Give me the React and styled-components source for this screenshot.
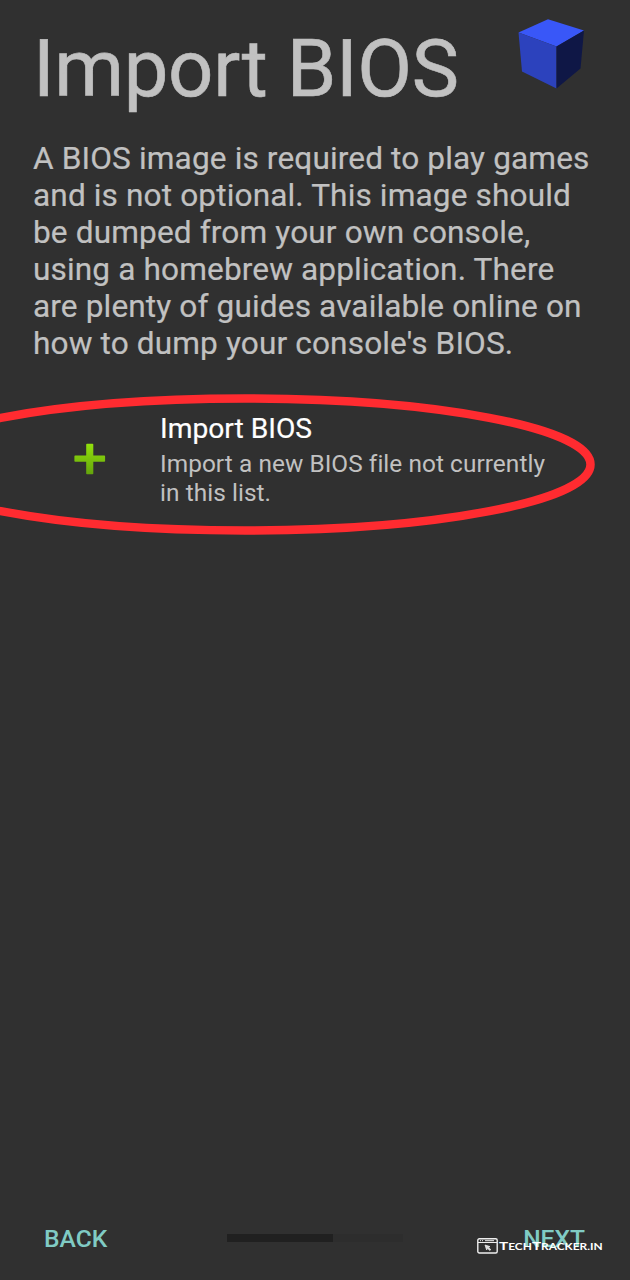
import React from 'react';
import styled, { createGlobalStyle } from 'styled-components';

const GlobalStyle = createGlobalStyle`
  * { box-sizing: border-box; }
  body { margin: 0; background: #303030; }
`;

const Screen = styled.main`
  position: relative;
  display: flex;
  flex-direction: column;
  width: 630px;
  height: 1280px;
  overflow: hidden;
  background: #303030;
  color: #c1c1c1;
  font-family: Roboto, 'Liberation Sans', sans-serif;
`;

const Header = styled.header`
  display: flex;
  justify-content: space-between;
  align-items: flex-start;
  height: 119px;
  padding: 0 45px 0 33px;
`;

const Title = styled.h1`
  margin: 22px 0 0;
  font-size: 79.6px;
  line-height: 94px;
  letter-spacing: -0.35px;
  font-weight: 400;
  white-space: nowrap;
  -webkit-text-stroke: 0.6px currentColor;
`;

const Cube = styled.svg`
  width: 68px;
  height: 72px;
  margin-top: 18px;
  flex: none;
`;

const Description = styled.p`
  margin: 22.4px 0 0;
  padding-left: 33px;
  font-size: 31.6px;
  line-height: 36.9px;
  letter-spacing: 0.13px;
  white-space: nowrap;
  -webkit-text-stroke: 0.2px currentColor;
`;

const ImportRow = styled.section`
  display: flex;
  margin-top: 49.6px;
  padding-left: 74px;
`;

const PlusIcon = styled.svg`
  width: 32px;
  height: 32px;
  margin: 31px 54px 0 0;
  flex: none;
`;

const RowTitle = styled.h2`
  margin: 0;
  color: #fff;
  font-size: 28.2px;
  line-height: 34px;
  font-weight: 400;
  white-space: nowrap;
  -webkit-text-stroke: 0.2px currentColor;
`;

const RowText = styled.p`
  margin: 3px 0 0;
  font-size: 24.4px;
  line-height: 29px;
  letter-spacing: 0.06px;
  white-space: nowrap;
`;

const Footer = styled.footer`
  display: flex;
  justify-content: space-between;
  align-items: center;
  height: 30px;
  margin: auto 45px 26px 44px;
`;

const NavButton = styled.button`
  padding: 0;
  border: 0;
  background: none;
  color: #80cbc4;
  font: 500 24.6px/30px Roboto, 'Liberation Sans', sans-serif;
`;

const Progress = styled.div`
  width: 176px;
  height: 8px;
  margin: 0 0 3px 0;
  background: #2d2d2d;
`;

const ProgressFill = styled.div`
  width: 60%;
  height: 100%;
  background: #202020;
`;

const Highlight = styled.svg`
  position: absolute;
  left: 0;
  top: 385px;
  width: 630px;
  height: 160px;
  pointer-events: none;
`;

const Watermark = styled.div`
  position: absolute;
  left: 477px;
  top: 1237px;
  display: flex;
  align-items: center;
  gap: 1px;
  color: #fff;
`;

const WatermarkIcon = styled.svg`
  width: 21px;
  height: 16px;
  flex: none;
`;

const WatermarkText = styled.span`
  font: 700 9.2px/16px Lato, 'Liberation Sans', sans-serif;
  text-transform: uppercase;
  white-space: nowrap;
  transform: translateY(1px) scaleX(1.295);
  transform-origin: 0 50%;
`;

const Capital = styled.span`
  font-size: 11.8px;
`;

export default function App() {
  return (
    <Screen>
      <GlobalStyle />
      <Header>
        <Title>Import BIOS</Title>
        <Cube viewBox="517 18 68 72">
          <path d="M518.5 32.5 548 19.2 584 30.5 556.5 46.5Z" fill="#3957f8" />
          <path d="M518.5 32.5 556.5 46.5V88.5L522 71.5Z" fill="#2c42bd" />
          <path d="M584 30.5 556.5 46.5V88.5L580.5 68.5Z" fill="#0f1746" />
        </Cube>
      </Header>
      <Description>
        A BIOS image is required to play games<br />
        and is not optional. This image should<br />
        be dumped from your own console,<br />
        using a homebrew application. There<br />
        are plenty of guides available online on<br />
        how to dump your console's BIOS.
      </Description>
      <ImportRow>
        <PlusIcon viewBox="0 0 32 32">
          <defs>
            <linearGradient id="plus" x1="0" y1="0" x2="0" y2="1">
              <stop offset="0" stopColor="#92e00c" />
              <stop offset="1" stopColor="#64a40c" />
            </linearGradient>
          </defs>
          <path d="M13 .8h5.5q.8 0 .8.8v11h11q.8 0 .8.8v4.5q0 .8-.8.8h-11v11.800q0 .8-.8.8H13q-.8 0-.8-.8V18.700H1.200q-.8 0-.8-.8v-4.500q0-.8.8-.8h11v-11q0-.8.8-.8Z" fill="url(#plus)" />
        </PlusIcon>
        <div>
          <RowTitle>Import BIOS</RowTitle>
          <RowText>
            Import a new BIOS file not currently<br />
            in this list.
          </RowText>
        </div>
      </ImportRow>
      <Footer>
        <NavButton>BACK</NavButton>
        <Progress><ProgressFill /></Progress>
        <NavButton>NEXT</NavButton>
      </Footer>
      <Highlight viewBox="0 385 630 160">
        <ellipse cx="245" cy="464.500" rx="345.500" ry="66" fill="none" stroke="#ff2b30" strokeWidth="8.500" />
      </Highlight>
      <Watermark>
        <WatermarkIcon viewBox="0 0 21 16" fill="none" stroke="#eee">
          <rect x=".8" y=".8" width="19.400" height="14.200" rx="1.500" strokeWidth="1.400" />
          <path d="M1 4.500h19" strokeWidth="1" />
          <path d="M3 2.700h1M5 2.700h1M8 2.700h9" strokeWidth="1" />
          <path d="m8 7 5 1.600-1.400 1 2.200 2-1 .9-2.100-2-1.100 1.400Z" fill="#ddd" strokeWidth=".7" />
        </WatermarkIcon>
        <WatermarkText><Capital>T</Capital>ech<Capital>T</Capital>racker.in</WatermarkText>
      </Watermark>
    </Screen>
  );
}
